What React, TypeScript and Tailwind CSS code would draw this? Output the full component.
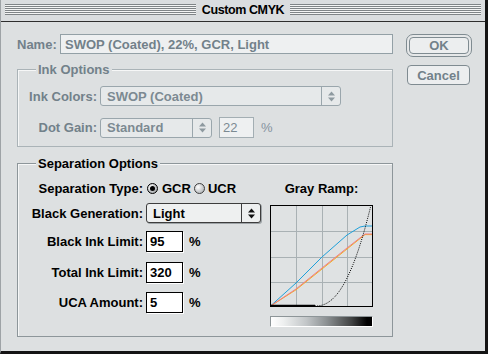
import React from "react";

const dim = "text-[#72818a]";

function Arrows({ color = "#222" }: { color?: string }) {
  return (
    <svg width="7" height="11" viewBox="0 0 7 11">
      <path d="M0 4.5 L3.5 0.5 L7 4.5 Z" fill={color} />
      <path d="M0 6.5 L3.5 10.5 L7 6.5 Z" fill={color} />
    </svg>
  );
}

function Popup({
  value,
  width,
  disabled,
}: {
  value: string;
  width: string;
  disabled?: boolean;
}) {
  return (
    <div
      className={`flex h-[20px] ${width} rounded-[3px] border ${
        disabled
          ? "border-[#9aa6ac] bg-[#e6e9ea] text-[#7c8a92]"
          : "border-[#3d3d3d] bg-[#eef0f0] text-black shadow-[1px_1px_0_#9ea4a7]"
      }`}
    >
      <div className="flex flex-1 items-center pl-[6px]">{value}</div>
      <div
        className={`flex w-[19px] items-center justify-center border-l ${
          disabled ? "border-[#9aa6ac]" : "border-[#3d3d3d]"
        }`}
      >
        <Arrows color={disabled ? "#8e9aa0" : "#111"} />
      </div>
    </div>
  );
}

function Field({ value }: { value: string }) {
  return (
    <div className="flex h-[21px] w-[37px] items-center border border-black bg-white pl-[3px] text-black shadow-[1px_1px_0_#fff]">
      {value}
    </div>
  );
}

function GrayRamp() {
  const black: string[] = [];
  for (let x = 45; x <= 101; x += 1) {
    const y = 101 - 101 * Math.pow((x - 45) / 56, 2.3);
    black.push(`${x},${y.toFixed(1)}`);
  }
  const cyan = "0.5,101 26,78 52,52 77,30 90,22 95,21 102,21";
  const pink = "0.5,101 26,84 52,63 77,43 95,29 102,29";
  const yellow = "0.5,101 26,84.8 52,64 77,44 95,29.6 102,29.6";

  return (
    <svg width="103" height="102" viewBox="0 0 103 102" className="bg-[#dfe2e3]">
      {[26.5, 52.5, 77.5].map((v) => (
        <g key={v} stroke="#a9b1b4" strokeWidth="1.2" shapeRendering="crispEdges">
          <line x1={v} y1="0" x2={v} y2="102" />
          <line x1="0" y1={v} x2="103" y2={v} />
        </g>
      ))}
      <polyline points={cyan} fill="none" stroke="#1ea0da" strokeWidth="1" />
      <polyline points={yellow} fill="none" stroke="#f2b21c" strokeWidth="1" />
      <polyline points={pink} fill="none" stroke="#f07a86" strokeWidth="1" />
      <polyline
        points={black.join(" ")}
        fill="none"
        stroke="#000"
        strokeWidth="1"
        strokeDasharray="1 1.2"
      />
      <line x1="0" y1="100.5" x2="45" y2="100.5" stroke="#000" strokeWidth="1.6" />
      <rect x="0.5" y="0.5" width="102" height="101" fill="none" stroke="#000" strokeWidth="1" />
    </svg>
  );
}

export default function App() {
  return (
    <div className="flex h-[354px] w-[488px] flex-col overflow-hidden border-b-[3px] border-l border-r-[3px] border-b-[#141414] border-l-[#9ea3a6] border-r-[#141414] bg-[#dde0e1] font-['Liberation_Sans',Arial,sans-serif] text-[13px] font-bold leading-none">
      {/* Title bar */}
      <div className="flex h-[22px] items-start border-b border-[#2e2e2e] bg-[#dadddf] px-[4px] pt-[4px]">
        <div className="h-[11px] flex-1 bg-[repeating-linear-gradient(to_bottom,#7f8487_0px,#7f8487_1px,#f3f4f4_1px,#f3f4f4_2px)]" />
        <div className="px-[6px] text-[12.5px] tracking-[-0.4px] text-black">Custom CMYK</div>
        <div className="h-[11px] flex-1 bg-[repeating-linear-gradient(to_bottom,#7f8487_0px,#7f8487_1px,#f3f4f4_1px,#f3f4f4_2px)]" />
      </div>

      {/* Body */}
      <div className="flex pl-[16px] pt-[12px]">
        <div className="w-[376px]">
          {/* Name */}
          <div className="flex h-[20px] items-center">
            <div className={`w-[43px] ${dim}`}>Name:</div>
            <div className={`flex h-[20px] flex-1 items-center border border-[#93a0a6] bg-[#eef0f1] pl-[4px] ${dim}`}>
              SWOP (Coated), 22%, GCR, Light
            </div>
          </div>

          {/* Ink Options */}
          <div className="relative mt-[15px] h-[78px] border border-[#aab3b7] pt-[16px] shadow-[inset_1px_1px_0_#f6f7f7]">
            <div className={`absolute left-[18px] top-[-7px] bg-[#dde0e1] px-[2px] ${dim}`}>Ink Options</div>
            <div className="flex items-center">
              <div className={`w-[79px] text-right ${dim}`}>Ink Colors:</div>
              <div className="ml-[3px]">
                <Popup value="SWOP (Coated)" width="w-[241px]" disabled />
              </div>
            </div>
            <div className="mt-[11px] flex items-center">
              <div className={`w-[79px] text-right ${dim}`}>Dot Gain:</div>
              <div className="ml-[3px]">
                <Popup value="Standard" width="w-[112px]" disabled />
              </div>
              <div className="ml-[7px] flex h-[21px] w-[35px] items-center border border-[#a3aeb3] bg-[#eef0f1] pl-[3px] font-normal text-[#7c8a92]">
                22
              </div>
              <div className="ml-[7px] font-normal text-[#8593a0]">%</div>
            </div>
          </div>

          {/* Separation Options */}
          <div className="relative mt-[16px] flex h-[174px] border border-[#8d969a] pt-[16px] shadow-[inset_1px_1px_0_#f6f7f7]">
            <div className="absolute left-[18px] top-[-7px] bg-[#dde0e1] px-[2px] text-black">Separation Options</div>

            <div className="w-[252px] text-black">
              <div className="flex h-[16px] items-center">
                <div className="w-[125px] text-right">Separation Type:</div>
                <div className="ml-[4px] flex h-[11px] w-[11px] items-center justify-center rounded-full border border-black bg-[radial-gradient(circle_at_35%_35%,#ffffff,#8d9295)]">
                  <div className="h-[5px] w-[5px] rounded-full bg-black" />
                </div>
                <div className="ml-[4px]">GCR</div>
                <div className="ml-[3px] h-[11px] w-[11px] rounded-full border border-[#3f3f3f] bg-[radial-gradient(circle_at_35%_35%,#ffffff,#9ea3a6)]" />
                <div className="ml-[3px]">UCR</div>
              </div>
              <div className="mt-[7px] flex items-center">
                <div className="w-[125px] text-right">Black Generation:</div>
                <div className="ml-[3px]">
                  <Popup value="Light" width="w-[115px]" />
                </div>
              </div>
              <div className="mt-[8px] flex items-center">
                <div className="w-[125px] text-right">Black Ink Limit:</div>
                <div className="ml-[3px]"><Field value="95" /></div>
                <div className="ml-[6px]">%</div>
              </div>
              <div className="mt-[10px] flex items-center">
                <div className="w-[125px] text-right">Total Ink Limit:</div>
                <div className="ml-[3px]"><Field value="320" /></div>
                <div className="ml-[6px]">%</div>
              </div>
              <div className="mt-[9px] flex items-center">
                <div className="w-[125px] text-right">UCA Amount:</div>
                <div className="ml-[3px]"><Field value="5" /></div>
                <div className="ml-[6px]">%</div>
              </div>
            </div>

            <div className="flex w-[103px] flex-col items-center text-black">
              <div className="flex h-[16px] items-center">Gray Ramp:</div>
              <div className="mt-[9px]">
                <GrayRamp />
              </div>
              <div className="mt-[9px] h-[11px] w-[103px] border-b border-l border-r border-t border-b-white border-l-[#8d9598] border-r-white border-t-[#8d9598] bg-[linear-gradient(to_right,#ffffff_0%,#eef0f0_12%,#c2c6c8_35%,#8c9193_55%,#404242_80%,#000000_95%)]" />
            </div>
          </div>
        </div>

        {/* Buttons */}
        <div className="ml-[13px] flex flex-col">
          <div className="flex h-[23px] w-[66px] rounded-[7px] border border-[#7f8b91] bg-[#e6e8e9] p-[2px]">
            <div className={`flex flex-1 items-center justify-center rounded-[4px] border border-[#7f8b91] bg-[#eceeef] ${dim}`}>
              OK
            </div>
          </div>
          <div className={`ml-[1px] mt-[8px] flex h-[20px] w-[63px] items-center justify-center rounded-[4px] border border-[#7f8b91] bg-[#eceeef] ${dim}`}>
            Cancel
          </div>
        </div>
      </div>
    </div>
  );
}
